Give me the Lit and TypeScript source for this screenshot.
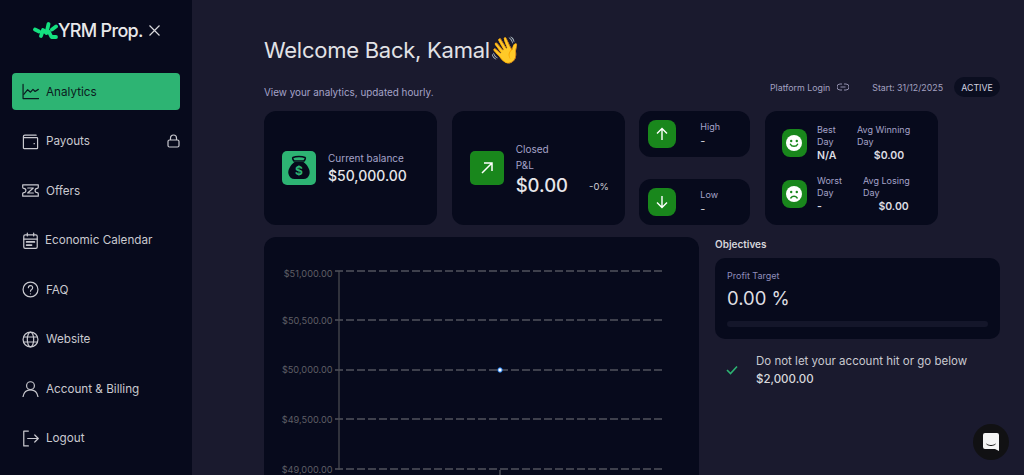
import { LitElement, html, css, svg } from "lit";
import { customElement } from "lit/decorators.js";

const ic = (body: unknown, w = 18) => html`<svg class="ic" width=${w} height=${w} viewBox="0 0 24 24" fill="none" stroke="currentColor" stroke-width="1.7" stroke-linecap="round" stroke-linejoin="round">${body}</svg>`;

const nav = [
  { label: "Analytics", active: true, icon: svg`<path d="M1.500 2v20h22"/><path d="M2.500 16l5.500-6.500 4 3.500 3.500-4 3 3 4.500-3"/>` },
  { label: "Payouts", lock: true, icon: svg`<path d="M2 6.500h19a1 1 0 0 1 1 1V21a1 1 0 0 1-1 1H3a1 1 0 0 1-1-1V5a2 2 0 0 1 2-2h16"/><path d="M17 15h.5"/>` },
  { label: "Offers", icon: svg`<path d="M1 4h22v3.500a1.500 1.500 0 0 1-1.500 1.500 3 3 0 0 0 0 6 1.500 1.500 0 0 1 1.500 1.500V20H1v-3.500a1.500 1.500 0 0 1 1.500-1.500 3 3 0 0 0 0-6A1.500 1.500 0 0 1 1 7.500z"/><path d="M8 8.500h8l-8 7h8"/>` },
  { label: "Economic Calendar", gap: 9, icon: svg`<rect x="2.500" y="4" width="19" height="19" rx="2"/><path d="M2.500 10h19M7.500 1.500v4M16.500 1.500v4"/><path d="M6.500 14h11M6.500 18.500h7" stroke-width="2.400"/>` },
  { label: "FAQ", icon: svg`<circle cx="12" cy="12" r="10.500"/><path d="M9 9.500a3 3 0 1 1 4.600 2.500c-1 .6-1.600 1.200-1.600 2.400"/><path d="M12 18v.1"/>` },
  { label: "Website", icon: svg`<circle cx="12" cy="12" r="10.500"/><ellipse cx="12" cy="12" rx="4.500" ry="10.500"/><path d="M2.500 8.500h19M2.500 15.500h19"/>` },
  { label: "Account & Billing", icon: svg`<circle cx="12" cy="8" r="5.500"/><path d="M1.500 23.500c1-5.800 5-9.500 10.500-9.500s9.500 3.700 10.500 9.500"/>` },
  { label: "Logout", icon: svg`<path d="M9 1.500H2.500v21H9"/><path d="M8 12h15M18 7l5 5-5 5"/>` },
];

@customElement("app-root")
export class AppRoot extends LitElement {
  static styles = css`
    :host { display: block; width: 1024px; height: 475px; overflow: hidden; position: relative; background: #1a1a2e;
      font-family: "Inter", "Liberation Sans", sans-serif; color: #e6e6ea; }
    .page { display: flex; height: 475px; }
    .side { width: 192px; flex: none; background: #070a1c; box-sizing: border-box; padding: 20px 12px 0; }
    .logo { display: flex; align-items: center; height: 20px; margin-left: 21px; font-size: 18px; font-weight: 500; letter-spacing: -0.7px; color: #e8e8ea; }
    .logo svg { flex: none; }
    .logo .x { margin-left: 6px; }
    .nav { display: flex; flex-direction: column; gap: 12.500px; margin-top: 33px; }
    .item { height: 37px; display: flex; align-items: center; padding: 0 0 0 10px; border-radius: 4px; font-size: 11.700px; color: #c9c9cf; gap: 7px; }
    .item.active { background: #2db473; color: #0b1a20; }
    .item.tight { gap: 6px; }
    .item .lock { margin-left: auto; }
    .ic { flex: none; }
    .main { flex: 1; padding: 37px 24px 0 72px; min-width: 0; }
    h1 { margin: 0; font-size: 22px; line-height: 27px; font-weight: 400; letter-spacing: -0.26px; color: #e2e2e6; display: flex; align-items: center; }
    .wave { font-size: 26px; line-height: 27px; letter-spacing: 0; font-family: "Noto Color Emoji", sans-serif; }
    .subrow { display: flex; align-items: center; justify-content: flex-end; height: 20px; margin-top: 13px; font-size: 8.800px; color: #a3a1c0; }
    .sub { margin-right: auto; font-size: 9.900px; padding-top: 9px; color: #a5a3c9; }
    .plat { display: flex; align-items: center; gap: 7px; margin-right: 23px; }
    .badge { margin-left: 11px; height: 20px; width: 46px; display: flex; align-items: center; justify-content: center; background: #0b0e20; border-radius: 10px; color: #d4d4e0; }
    .cards { display: flex; gap: 14.670px; margin-top: 14px; width: 674px; }
    .card { background: #070a1c; border-radius: 12px; }
    .wide { width: 173px; height: 114px; flex: none; display: flex; align-items: center; box-sizing: border-box; padding-left: 18px; gap: 12px; }
    .tile { width: 34px; height: 34px; border-radius: 5px; background: #19871c; display: flex; align-items: center; justify-content: center; flex: none; color: #fff; }
    .tile.mint { background: #2db473; color: #070a1c; }
    .lab { font-size: 10px; color: #a5a3c9; line-height: 16px; }
    .val { font-size: 14px; font-weight: 500; color: #e6e6ea; line-height: 20px; }
    .big { font-size: 18.500px; line-height: 24px; font-weight: 500; }
    .pl { display: flex; align-items: flex-end; }
    .pct { font-size: 9.500px; color: #cfcfd6; margin-left: 21px; line-height: 20px; }
    .closed { padding-top: 2px; }
    .stack { width: 111px; flex: none; display: flex; flex-direction: column; justify-content: space-between; height: 114px; }
    .mini { height: 46px; display: flex; align-items: center; padding-left: 9px; box-sizing: border-box; border-radius: 12px; background: #070a1c; }
    .mini .tile { width: 28px; height: 28px; border-radius: 8px; }
    .mini .txt { margin-left: 24px; font-size: 9px; color: #a5a3c9; line-height: 14px; }
    .mini .dash { color: #d0d0d6; font-size: 11px; }
    .days { width: 173px; height: 114px; flex: none; box-sizing: border-box; padding: 8px 0 0 17px; display: flex; flex-direction: column; gap: 3px; }
    .day { display: flex; align-items: center; height: 48px; }
    .day .tile { width: 25px; height: 28px; border-radius: 8px; }
    .col { font-size: 9px; color: #a5a3c9; line-height: 12px; }
    .col b { display: block; font-weight: 600; font-size: 10.500px; line-height: 15px; color: #dcdce2; }
    .c1 { margin-left: 10px; width: 40px; }
    .c2 b { text-align: right; padding-right: 6px; }
    .c3 { margin-left: 6px; }
    .c3 b { text-align: right; padding-right: 1px; }
    .lower { display: flex; gap: 16px; margin-top: 12px; }
    .chart { width: 435px; height: 260px; flex: none; border-radius: 12px; background: #070a1c; }
    .chart svg { display: block; }
    .axis { font: 9.200px "Inter", sans-serif; fill: #5f5f65; }
    .obj { width: 285px; flex: none; }
    .obj h3 { margin: 0; font-size: 10px; line-height: 15px; font-weight: 600; color: #d6d6dc; }
    .target { margin-top: 6px; height: 81px; box-sizing: border-box; padding: 11px 12px 0; border-radius: 10px; background: #070a1c; }
    .target .t { font-size: 9px; line-height: 13px; color: #8f8dbb; }
    .target .n { font-size: 18.500px; line-height: 24px; margin-top: 4px; color: #dedee2; }
    .bar { height: 6px; margin-top: 11px; border-radius: 3px; background: #14162a; }
    .rule { display: flex; align-items: center; margin-top: 13px; padding-left: 11px; }
    .rule svg { flex: none; color: #2db473; }
    .rule div { margin-left: 18px; font-size: 11.500px; line-height: 18px; color: #c9c9d0; }
    .rule b { font-weight: 500; display: block; color: #d8d8dc; }
    .chat { position: absolute; left: 973px; top: 424px; width: 36px; height: 36px; border-radius: 50%; background: #111113; display: flex; align-items: center; justify-content: center; }
  `;

  private smile(sad: boolean) {
    return html`<svg width="16" height="16" viewBox="0 0 20 20"><circle cx="10" cy="10" r="10" fill="#fff"/><circle cx="6.500" cy="7.500" r="1.500" fill="#19871c"/><circle cx="13.500" cy="7.500" r="1.500" fill="#19871c"/>
      <path d=${sad ? "M6 15c2-3 6-3 8 0" : "M5.500 11.500c1.500 3.500 7.500 3.500 9 0"} fill="none" stroke="#19871c" stroke-width="1.800" stroke-linecap="round"/></svg>`;
  }

  render() {
    const ys = [[271, 277, "$51,000.00"], [320, 323.500, "$50,500.00"], [370, 373, "$50,000.00"], [419, 422.500, "$49,500.00"], [469, 472.500, "$49,000.00"]] as const;
    return html`<div class="page">
      <aside class="side">
        <div class="logo">
          <svg width="25" height="17" viewBox="0 0 25 17" fill="none" stroke="#14e07f" stroke-width="3.800" stroke-linecap="round" stroke-linejoin="round"><path d="M2 7.500l4 2M8 14l2-6 3.500 3 2-9M16 10l2.500 5h4.500M19 7.500l4-3"/></svg>
          <span>YRM Prop.</span>
          <svg class="x" width="11" height="11" viewBox="0 0 11 11" stroke="#d8d8dc" stroke-width="1.200" fill="none"><path d="M.5.5l10 10M10.500.5l-10 10"/></svg>
        </div>
        <nav class="nav">
          ${nav.map((n) => html`<div class="item ${n.active ? "active" : ""} ${n.gap ? "tight" : ""}">
            ${ic(n.icon, 17)}<span>${n.label}</span>
            ${n.lock ? html`<svg class="lock" width="13" height="14" viewBox="0 0 13 14" fill="none" stroke="#c9c9cf" stroke-width="1.200"><rect x="1" y="6" width="11" height="7" rx="1.500"/><path d="M3.500 6V4a3 3 0 0 1 6 0v2"/></svg>` : ""}
          </div>`)}
        </nav>
      </aside>
      <main class="main">
        <h1>Welcome Back, Kamal<span class="wave">👋</span></h1>
        <div class="subrow">
          <span class="sub">View your analytics, updated hourly.</span>
          <span class="plat">Platform Login
            <svg width="12" height="8" viewBox="0 0 12 8" fill="none" stroke="#8f8dab" stroke-width="1"><path d="M5 1H3a3 3 0 0 0 0 6h2M7 1h2a3 3 0 0 1 0 6H7M3.500 4h5"/></svg></span>
          <span>Start: 31/12/2025</span>
          <span class="badge">ACTIVE</span>
        </div>
        <section class="cards">
          <div class="card wide">
            <div class="tile mint">
              <svg width="24" height="26" viewBox="0 0 24 26"><path d="M6 2.500c3-1.500 9-1.500 12 0 1 .5 0 2-1 3.500H7C6 4.500 5 3 6 2.500z" fill="none" stroke="#070a1c" stroke-width="1.500"/><path d="M7.500 7h9c4 3 7 8 6 12-.7 3-3 5-6 5h-9c-3 0-5.300-2-6-5-1-4 2-9 6-12z" fill="#070a1c"/><text x="12" y="20" font-size="12" font-weight="700" text-anchor="middle" fill="#2db473" font-family="Inter">$</text></svg>
            </div>
            <div><div class="lab">Current balance</div><div class="val">$50,000.00</div></div>
          </div>
          <div class="card wide">
            <div class="tile"><svg width="14" height="14" viewBox="0 0 14 14" fill="none" stroke="#fff" stroke-width="1.500"><path d="M2 12L12 2M4 2h8v8"/></svg></div>
            <div class="closed"><div class="lab">Closed<br/>P&amp;L</div>
              <div class="pl"><span class="big">$0.00</span><span class="pct">-0%</span></div></div>
          </div>
          <div class="stack">
            <div class="mini"><div class="tile"><svg width="14" height="14" viewBox="0 0 14 14" fill="none" stroke="#fff" stroke-width="1.400"><path d="M7 13V1.500M2 6.500l5-5 5 5"/></svg></div><div class="txt">High<br/><span class="dash">-</span></div></div>
            <div class="mini"><div class="tile"><svg width="14" height="14" viewBox="0 0 14 14" fill="none" stroke="#fff" stroke-width="1.400"><path d="M7 1v11.500M2 7.500l5 5 5-5"/></svg></div><div class="txt">Low<br/><span class="dash">-</span></div></div>
          </div>
          <div class="card days">
            <div class="day"><div class="tile">${this.smile(false)}</div>
              <div class="col c1">Best<br/>Day<b>N/A</b></div>
              <div class="col c2">Avg Winning<br/>Day<b>$0.00</b></div></div>
            <div class="day"><div class="tile">${this.smile(true)}</div>
              <div class="col c1">Worst<br/>Day<b>-</b></div>
              <div class="col c3">Avg Losing<br/>Day<b>$0.00</b></div></div>
          </div>
        </section>
        <section class="lower">
          <div class="chart">
            <svg width="435" height="260" viewBox="264 237 435 260">
              ${ys.map(([y, ty, t]) => svg`<line x1="335" x2="662" y1=${y} y2=${y} stroke="#77777d" stroke-width="1.200" stroke-dasharray="8 3"/>
                <text class="axis" x="332.500" y=${ty} text-anchor="end">${t}</text>`)}
              <line x1="339" x2="339" y1="271" y2="470" stroke="#4d4d53" stroke-width="1.200"/>
              <line x1="500" x2="500" y1="470" y2="475" stroke="#6f6f75"/>
              <circle cx="500" cy="370" r="2.200" fill="#fff" stroke="#1c7cf0" stroke-width="1"/>
            </svg>
          </div>
          <div class="obj">
            <h3>Objectives</h3>
            <div class="target">
              <div class="t">Profit Target</div>
              <div class="n">0.00 %</div>
              <div class="bar"></div>
            </div>
            <div class="rule">
              <svg width="12" height="10" viewBox="0 0 12 10" fill="none" stroke="currentColor" stroke-width="1.600"><path d="M1 5l3.500 3.500L11 1.500"/></svg>
              <div>Do not let your account hit or go below<b>$2,000.00</b></div>
            </div>
          </div>
        </section>
      </main>
    </div>
    <div class="chat"><svg width="16" height="18" viewBox="0 0 16 18"><path d="M2 0h12a2 2 0 0 1 2 2v16l-4-2H2a2 2 0 0 1-2-2V2a2 2 0 0 1 2-2z" fill="#f4f4f4"/><path d="M3.500 11c2.500 2 6.500 2 9 0" fill="none" stroke="#111" stroke-width="1"/></svg></div>`;
  }
}
